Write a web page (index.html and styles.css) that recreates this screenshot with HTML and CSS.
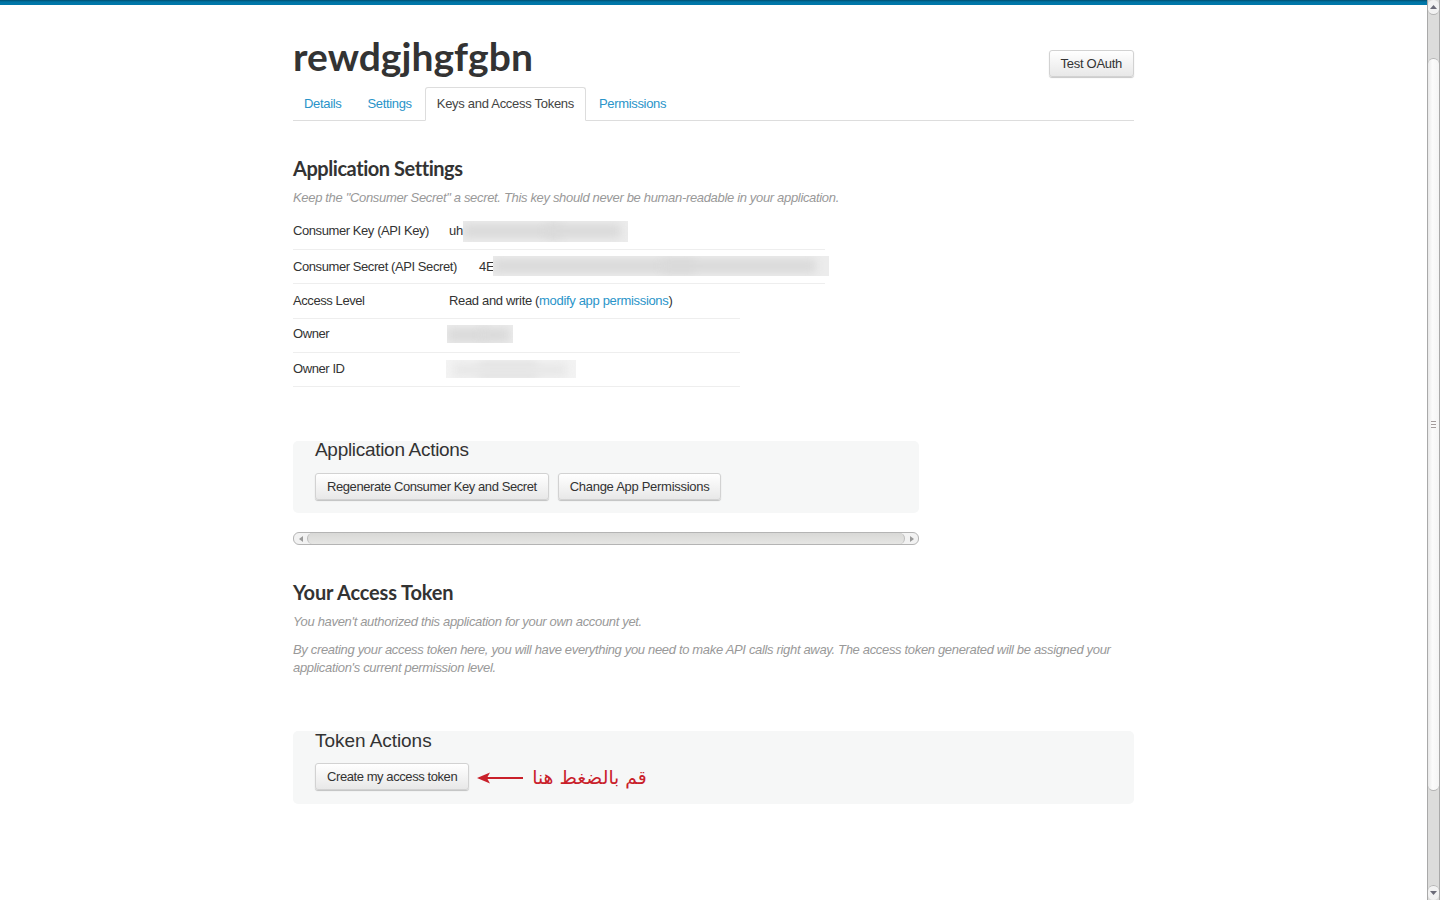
FILE: index.html
```html
<!DOCTYPE html>
<html lang="en">
<head>
<meta charset="utf-8">
<title>Keys and Access Tokens</title>
<link rel="stylesheet" href="styles.css">
</head>
<body>
<div class="window">
  <div class="viewport">
    <div class="topbar"></div>
    <main class="container">
      <header class="app-header">
        <h1 class="app-title">rewdgjhgfgbn</h1>
        <a class="btn btn-test">Test OAuth</a>
      </header>
      <nav class="tabs">
        <a class="tab tab-details">Details</a>
        <a class="tab tab-settings">Settings</a>
        <a class="tab tab-active">Keys and Access Tokens</a>
        <a class="tab tab-perms">Permissions</a>
      </nav>

      <section class="settings">
        <h2 class="section-title">Application Settings</h2>
        <p class="hint">Keep the "Consumer Secret" a secret. This key should never be human-readable in your application.</p>
        <div class="rows">
          <div class="row row-long">
            <span class="row-label">Consumer Key (API Key)</span>
            <span class="row-value">uh</span>
            <span class="smear smear-key"><i></i><i></i></span>
          </div>
          <div class="row row-long row-low">
            <span class="row-label row-label-wide">Consumer Secret (API Secret)</span>
            <span class="row-value">4E</span>
            <span class="smear smear-secret"><i></i><i></i></span>
          </div>
          <div class="row row-low">
            <span class="row-label">Access Level</span>
            <span class="row-value">Read and write (<a class="link">modify app permissions</a>)</span>
          </div>
          <div class="row">
            <span class="row-label row-label-blur">Owner</span>
            <span class="smear smear-owner"><i></i><i></i></span>
          </div>
          <div class="row">
            <span class="row-label row-label-blur">Owner ID</span>
            <span class="smear smear-id"><i></i><i></i></span>
          </div>
        </div>
      </section>

      <section class="actions actions-app">
        <h3 class="actions-title">Application Actions</h3>
        <div class="actions-buttons">
          <a class="btn btn-tight">Regenerate Consumer Key and Secret</a>
          <a class="btn">Change App Permissions</a>
        </div>
      </section>

      <div class="hscroll">
        <span class="hscroll-btn"><svg width="6" height="8" viewBox="0 0 6 8"><path d="M5 1v6L1 4z" fill="#9a9a9a"/></svg></span>
        <span class="hscroll-thumb"></span>
        <span class="hscroll-btn hscroll-btn-end"><svg width="6" height="8" viewBox="0 0 6 8"><path d="M1 1v6l4-3z" fill="#9a9a9a"/></svg></span>
      </div>

      <section class="token">
        <h2 class="section-title section-title-token">Your Access Token</h2>
        <p class="hint">You haven't authorized this application for your own account yet.</p>
        <p class="hint hint-long">By creating your access token here, you will have everything you need to make API calls right away. The access token generated will be assigned your application's current permission level.</p>
      </section>

      <section class="actions actions-token">
        <h3 class="actions-title">Token Actions</h3>
        <div class="actions-buttons">
          <a class="btn btn-tight">Create my access token</a>
          <svg class="arrow" width="46" height="14" viewBox="0 0 46 14"><path d="M0 7 13 1.500 10.500 6H46V8H10.500L13 12.500z" fill="#c9202a"/></svg>
          <span class="note" lang="ar" dir="rtl">قم بالضغط هنا</span>
        </div>
      </section>
    </main>
  </div>

  <aside class="vscroll">
    <span class="vscroll-btn vscroll-btn-top"><svg width="9" height="6" viewBox="0 0 9 6"><path d="M4.500 1 8 5H1z" fill="#6b6b78"/></svg></span>
    <span class="vscroll-track vscroll-track-top"></span>
    <span class="vscroll-thumb"><span class="grip"></span><span class="grip"></span><span class="grip"></span></span>
    <span class="vscroll-track vscroll-track-bottom"></span>
    <span class="vscroll-btn vscroll-btn-bottom"><svg width="9" height="6" viewBox="0 0 9 6"><path d="M1 1h7L4.500 5z" fill="#6b6b78"/></svg></span>
  </aside>
</div>
</body>
</html>
```
FILE: styles.css
```css
* { box-sizing: border-box; }
html, body { margin: 0; height: 100%; overflow: hidden; background: #fff; }
body { font-family: "Liberation Sans", Arial, sans-serif; font-size: 13px; line-height: 18px; color: #333; letter-spacing: -0.33px; }
.window { display: flex; height: 900px; width: 1440px; }
.viewport { flex: 1; min-width: 0; }
.topbar { height: 5px; background: linear-gradient(#004f70 0, #0075a6 40%, #0078aa 100%); }
.container { width: 841px; margin: 0 auto; }

.app-header { display: flex; justify-content: space-between; align-items: flex-start; height: 82px; padding-top: 29px; }
.app-title { margin: 0; font-family: Lato, sans-serif; font-size: 39px; line-height: 44px; font-weight: 700; color: #333; letter-spacing: 0.05px; }
.btn { display: inline-block; height: 27px; padding: 0 11px; border: 1px solid #d2d2d2; border-radius: 3px; background: linear-gradient(#fff, #e8e8e8); box-shadow: 0 1px 1px rgba(0,0,0,.22); font-size: 13px; line-height: 25px; color: #333; white-space: nowrap; letter-spacing: -0.29px; }
.btn-test { margin-top: 16px; }
.btn-tight { letter-spacing: -0.42px; }

.tabs { display: flex; align-items: flex-end; height: 34px; border-bottom: 1px solid #ddd; }
.tab { height: 34px; padding: 0 11px; line-height: 36px; color: #2a94c9; white-space: nowrap; }
.tab-details { padding-right: 15px; }
.tab-settings { padding-right: 13px; }
.tab-active { height: 34px; margin-bottom: -1px; background: #fff; border: 1px solid #ddd; border-bottom-color: #fff; border-radius: 3px 3px 0 0; color: #444; line-height: 32px; letter-spacing: -0.29px; }
.tab-perms { padding-left: 13px; }

.settings { padding-top: 34px; }
.section-title { margin: 0; font-family: Lato, sans-serif; font-size: 20px; line-height: 26px; font-weight: 700; color: #333; letter-spacing: -0.45px; }
.section-title-token { letter-spacing: -0.15px; }
.hint { margin: 0; font-style: italic; color: #999; line-height: 18px; }
.settings .hint { margin-top: 8px; }

.rows { margin-top: 8.8px; }
.row { display: flex; align-items: center; width: 447px; height: 34.3px; padding-bottom: 2px; border-bottom: 1px solid #eee; white-space: nowrap; }
.row-low { padding-bottom: 0; }
.row-low .smear { margin-top: -2px; }
.row-long { width: 532px; }
.row-label { flex: none; width: 156px; letter-spacing: -0.42px; }
.row-label-wide { width: 186px; }
.row-label-blur { width: 154px; }
.link { color: #2a94c9; }

.smear { position: relative; display: block; flex: none; overflow: hidden; background: #ececec; height: 20px; }
.smear i { display: block; position: absolute; top: 3px; height: 14px; border-radius: 4px; background: #dadada; filter: blur(4px); }
.smear i:first-child { left: 0; width: 60%; }
.smear i:last-child { left: 50%; width: 46%; }
.smear-key { width: 165px; height: 21px; }
.smear-secret { width: 336px; height: 20px; margin-right: -5px; margin-left: -1px; }
.smear-owner { width: 66px; height: 18px; }
.smear-id { width: 130px; height: 18px; margin-left: -1px; background: #f3f3f3; }
.smear-id i:first-child { left: 25%; width: 45%; }
.smear-id i:last-child { left: 5%; width: 88%; background: #e8e8e8; }

.actions { background: #f6f7f7; border-radius: 5px; padding: 0 22px; }
.actions-app { width: 626px; height: 72px; margin-top: 54px; }
.actions-token { height: 73px; margin-top: 54px; }
.actions-title { margin: 0; height: 32px; font-size: 19px; line-height: 17px; font-weight: 400; color: #333; letter-spacing: -0.3px; }
.actions-token .actions-title { line-height: 20px; letter-spacing: -0.05px; }
.actions-buttons { display: flex; align-items: center; gap: 9px; }

.hscroll { display: flex; width: 626px; height: 13px; margin-top: 19px; border: 1px solid #b4b4b4; border-radius: 6px; background: #f2f2f2; overflow: hidden; }
.hscroll-btn { flex: none; width: 13px; display: flex; align-items: center; justify-content: center; }
.hscroll-thumb { flex: 1; background: linear-gradient(#d8d8d6, #e6e6e4); border: 1px solid #bcbcbc; border-width: 0 1px; border-radius: 6px; }

.token { padding-top: 34px; }
.token .hint { margin-top: 8px; }
.token .hint-long { margin-top: 10px; }

.arrow { margin-top: 2px; margin-left: -1px; }
.note { margin-top: 2px; font-family: "DejaVu Sans", sans-serif; font-size: 18.8px; line-height: 23px; color: #c9202a; letter-spacing: 0; }

.vscroll { flex: none; width: 13px; height: 900px; display: flex; flex-direction: column; border: 1px solid #a9a9a9; border-width: 0 1px; background: #dcdcdb; }
.vscroll-btn { flex: none; height: 15px; background: #f2f2f2; display: flex; align-items: center; justify-content: center; border-radius: 6px; }
.vscroll-btn-top { border-bottom: 1px solid #b4b4b4; }
.vscroll-btn-bottom { border-top: 1px solid #b4b4b4; }
.vscroll-track-top { flex: none; height: 43px; }
.vscroll-track-bottom { flex: 1; }
.vscroll-thumb { flex: none; height: 733px; background: linear-gradient(90deg, #e9e9e9, #fbfbfb 40%, #f4f4f4); border: 1px solid #b4b4b4; border-width: 1px 0; border-radius: 6px; display: flex; flex-direction: column; align-items: center; justify-content: center; gap: 2px; }
.grip { display: block; width: 5px; height: 1px; background: #a39b9b; }
```
